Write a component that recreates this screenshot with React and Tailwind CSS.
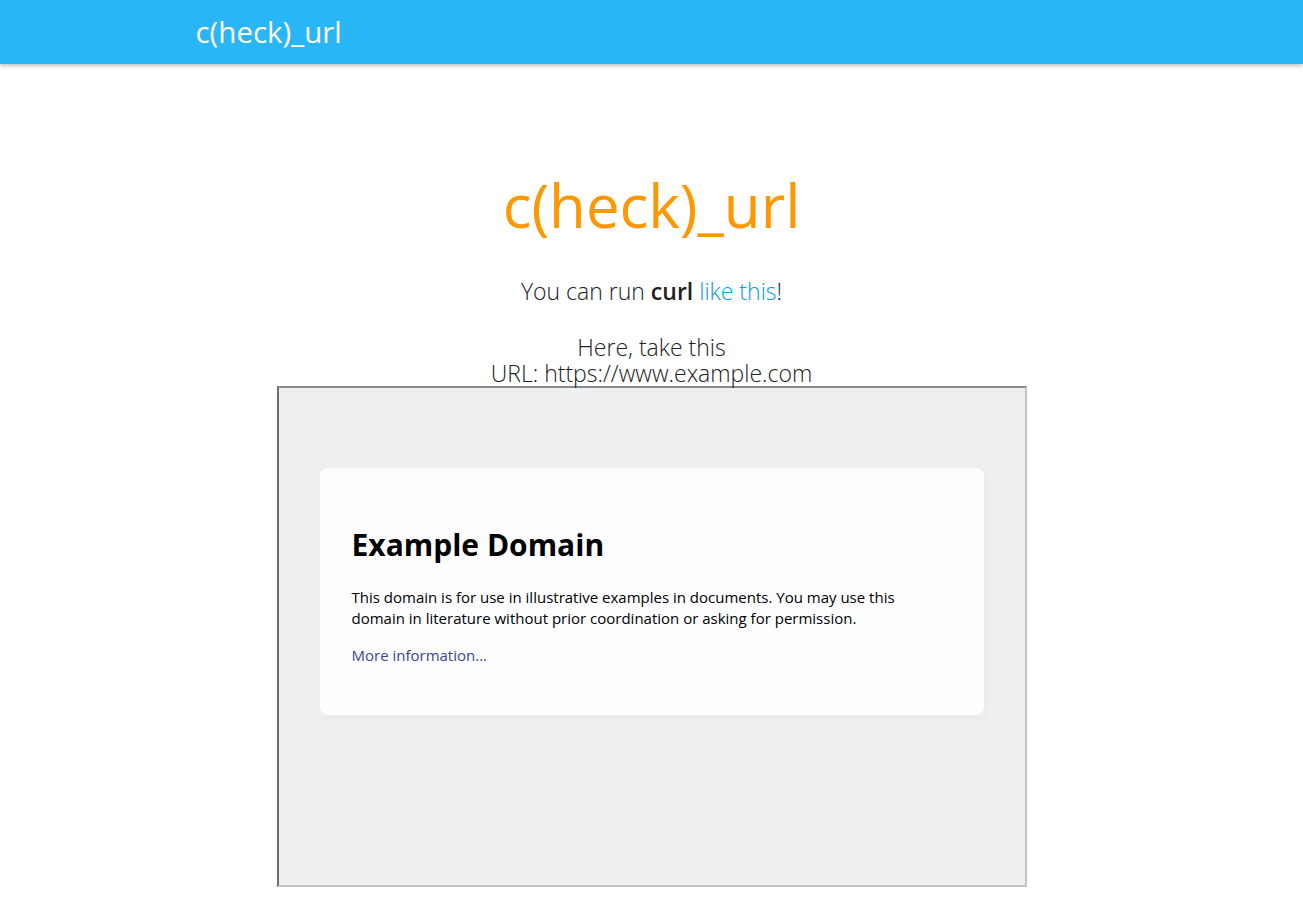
import React from 'react';

const sans = { fontFamily: '"Open Sans", "Noto Sans", sans-serif' };

function Header() {
  return (
    <nav className="h-16 bg-[#29b6f6] shadow-[0_2px_4px_rgba(0,0,0,0.25)]">
      <div className="w-[70%] mx-auto h-full flex items-center">
        <a href="#" className="text-white text-[29.5px] leading-none">c(heck)_url</a>
      </div>
    </nav>
  );
}

function ExampleFrame() {
  return (
    <div className="w-[750px] h-[501px] mx-auto border-2 border-t-[#8a8a8a] border-l-[#6e6e6e] border-b-[#c4c4c4] border-r-[#c4c4c4] bg-[#eeeff1] overflow-hidden text-left">
      <div className="w-[664px] mx-auto mt-20 p-8 bg-[#fdfdff] rounded-lg shadow-[2px_3px_7px_2px_rgba(0,0,0,0.02)] text-black">
        <h1 className="text-[30px] font-bold leading-tight mt-[26px] mb-[24px]">Example Domain</h1>
        <p className="text-[15px] leading-[21px] mb-4">
          This domain is for use in illustrative examples in documents. You may use this domain in literature without prior coordination or asking for permission.
        </p>
        <p className="text-[15px] leading-[21px] mb-[17px]">
          <a href="#" className="text-[#38488f]">More information...</a>
        </p>
      </div>
    </div>
  );
}

export default function App() {
  return (
    <div className="min-h-screen bg-white" style={sans}>
      <Header />
      <main className="text-center">
        <h1 className="text-[60px] leading-none text-[#ff9800] pt-[111px]">c(heck)_url</h1>
        <p className="text-[23px] font-light text-[#212121] mt-[39px]">
          You can run <b className="font-semibold">curl</b> <a href="#" className="text-[#039be5]">like this</a>!
        </p>
        <p className="text-[23px] font-light text-[#212121] leading-[26px] mt-[25px]">
          Here, take this<br />URL: https://www.example.com
        </p>
        <ExampleFrame />
      </main>
    </div>
  );
}
